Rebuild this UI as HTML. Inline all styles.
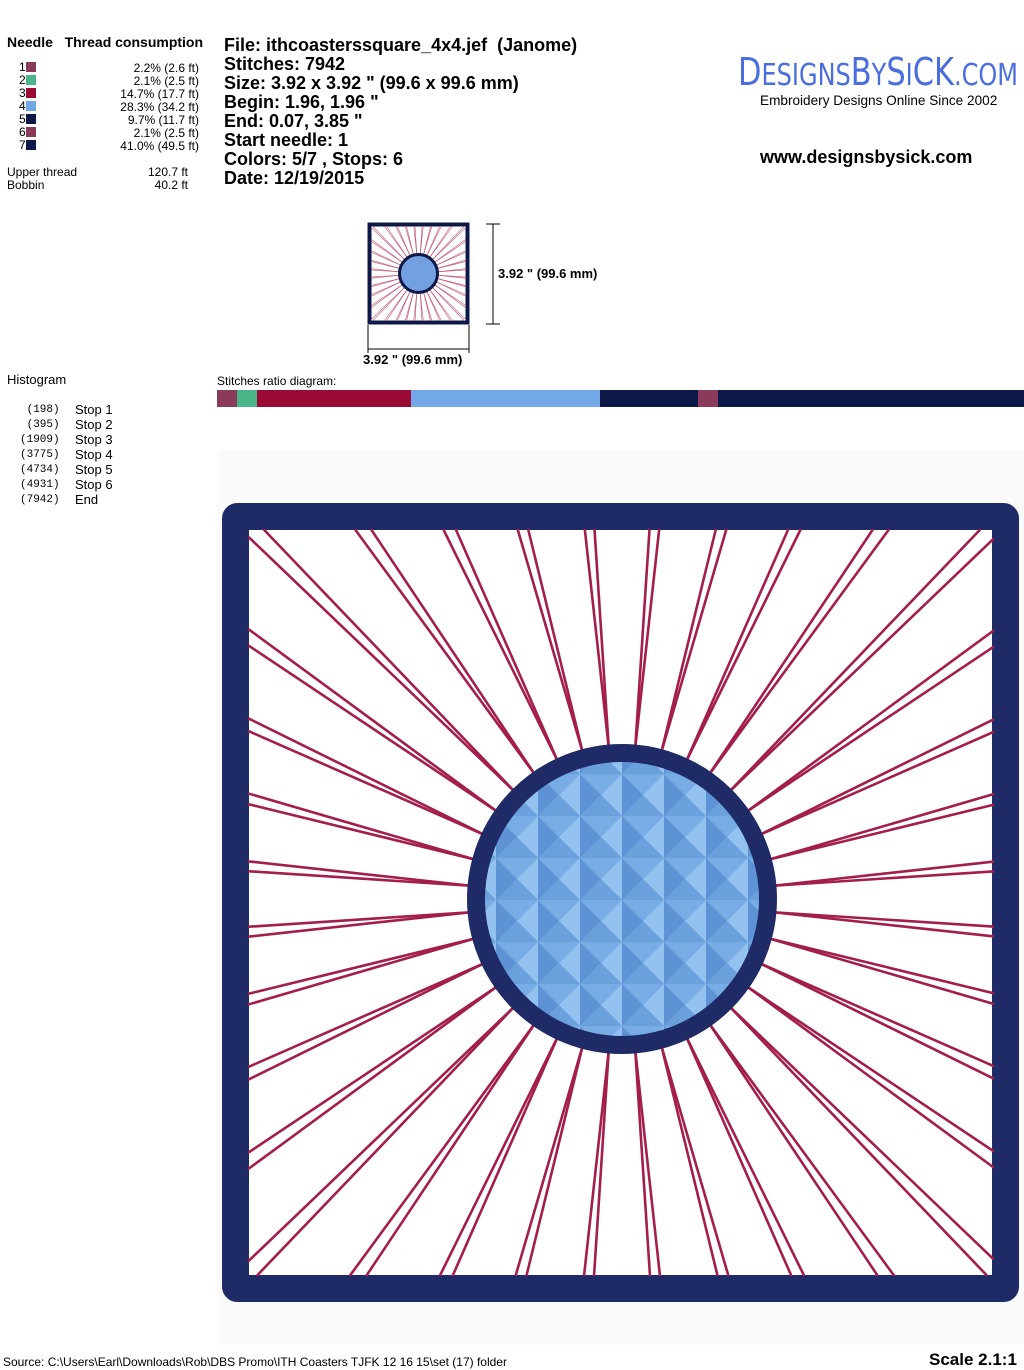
<!DOCTYPE html>
<html><head><meta charset="utf-8"><style>
body{margin:0;width:1024px;height:1370px;background:#fff;position:relative;overflow:hidden;font-family:"Liberation Sans",Arial,sans-serif;color:#000}
.a{position:absolute;white-space:nowrap}
.s{font-size:12px;line-height:13px}
.b{font-weight:bold;font-size:18px;line-height:19px}
.sw{display:inline-block;width:10px;height:10px;vertical-align:top;margin-top:1px}
</style></head><body>
<div class="a" style="left:7px;top:34px;font-weight:bold;font-size:14px">Needle&nbsp;&nbsp; Thread consumption</div>
<div class="a s" style="left:19px;top:61px">
1<span class="sw" style="background:#8a3a5a"></span><br>2<span class="sw" style="background:#4bb58a"></span><br>3<span class="sw" style="background:#9a0a35"></span><br>4<span class="sw" style="background:#73a8e6"></span><br>5<span class="sw" style="background:#0c1848"></span><br>6<span class="sw" style="background:#8a3a5a"></span><br>7<span class="sw" style="background:#0c1848"></span></div>
<div class="a s" style="left:100px;top:62px;width:99px;text-align:right">2.2% (2.6 ft)<br>2.1% (2.5 ft)<br>14.7% (17.7 ft)<br>28.3% (34.2 ft)<br>9.7% (11.7 ft)<br>2.1% (2.5 ft)<br>41.0% (49.5 ft)</div>
<div class="a s" style="left:7px;top:166px">Upper thread<br>Bobbin</div>
<div class="a s" style="left:130px;top:166px;width:58px;text-align:right">120.7 ft<br>40.2 ft</div>
<div class="a b" style="left:224px;top:36px">File: ithcoasterssquare_4x4.jef&nbsp; (Janome)<br>Stitches: 7942<br>Size: 3.92 x 3.92 " (99.6 x 99.6 mm)<br>Begin: 1.96, 1.96 "<br>End: 0.07, 3.85 "<br>Start needle: 1<br>Colors: 5/7 , Stops: 6<br>Date: 12/19/2015</div>
<div class="a" style="left:738px;top:52px;font-size:38px;line-height:40px;color:#4a6ee0;font-family:'DejaVu Sans Condensed','DejaVu Sans',sans-serif;transform:scaleX(0.89);transform-origin:left top">D<span style="font-size:30px">ESIGNS</span>B<span style="font-size:30px">Y</span>S<span style="font-size:30px">I</span>CK<span style="font-size:30px">.COM</span></div>
<div class="a" style="left:760px;top:93px;font-size:13.6px">Embroidery Designs Online Since 2002</div>
<div class="a" style="left:760px;top:147px;font-weight:bold;font-size:18px">www.designsbysick.com</div>

<svg class="a" style="left:360px;top:215px" width="260" height="160">
<rect x="9.5" y="9.5" width="98" height="98" fill="#fff" stroke="#0c1848" stroke-width="4"/>
<g id="mini"></g>
<circle cx="58.5" cy="58.5" r="19" fill="#73a0e0" stroke="#0c1848" stroke-width="3"/>
<line x1="133" y1="9" x2="133" y2="109" stroke="#000"/><line x1="126" y1="9" x2="140" y2="9" stroke="#000"/><line x1="126" y1="109" x2="140" y2="109" stroke="#000"/>
<line x1="8" y1="134" x2="109" y2="134" stroke="#000"/><line x1="8" y1="110" x2="8" y2="138" stroke="#000"/><line x1="109" y1="110" x2="109" y2="138" stroke="#000"/>
<text x="138" y="63" font-size="13" font-weight="bold" font-family="Liberation Sans">3.92 " (99.6 mm)</text>
<text x="3" y="149" font-size="13" font-weight="bold" font-family="Liberation Sans">3.92 " (99.6 mm)</text>
</svg>

<div class="a" style="left:7px;top:372px;font-size:13px">Histogram</div>
<div class="a" style="left:20px;top:403px;font-family:'Liberation Mono',monospace;font-size:11px;line-height:15px">&nbsp;(198)<br>&nbsp;(395)<br>(1909)<br>(3775)<br>(4734)<br>(4931)<br>(7942)</div>
<div class="a" style="left:75px;top:402px;font-size:13px;line-height:15px">Stop 1<br>Stop 2<br>Stop 3<br>Stop 4<br>Stop 5<br>Stop 6<br>End</div>
<div class="a" style="left:217px;top:374px;font-size:12px">Stitches ratio diagram:</div>
<div class="a" style="left:217px;top:390px;height:17px;width:807px;display:flex">
<div style="width:20px;background:#8a3a5a"></div><div style="width:20px;background:#4bb58a"></div><div style="width:154px;background:#9a0a35"></div><div style="width:189px;background:#73a8e6"></div><div style="width:98px;background:#0c1848"></div><div style="width:20px;background:#8a3a5a"></div><div style="flex:1;background:#0c1848"></div></div>

<div class="a" style="left:217px;top:450px;width:807px;height:895px;background:#fafafa"></div>
<svg class="a" style="left:0;top:0" width="1024" height="1370">
<rect x="235.5" y="516.5" width="770" height="772" rx="2" fill="#fff" stroke="#1f2b66" stroke-width="27"/>
<g id="rays" stroke-linecap="round"></g>
<defs><pattern id="q" x="622" y="900" width="42" height="42" patternUnits="userSpaceOnUse">
<rect width="42" height="42" fill="#7aaee6"/>
<polygon points="0,0 21,21 0,42" fill="#5d92d4"/><polygon points="42,0 21,21 42,42" fill="#94c2f0"/>
<polygon points="0,0 21,21 42,0" fill="#78ace4"/><polygon points="0,42 21,21 42,42" fill="#6aa0dc"/></pattern></defs>
<circle cx="622" cy="899" r="146" fill="url(#q)" stroke="#1f2b66" stroke-width="18"/>
</svg>
<div class="a" style="left:3px;top:1355px;font-size:12px">Source: C:\Users\Earl\Downloads\Rob\DBS Promo\ITH Coasters TJFK 12 16 15\set (17) folder</div>
<div class="a" style="left:929px;top:1350px;font-size:17px;font-weight:bold">Scale 2.1:1</div>
<script>
function build(g,cx,cy,r0,L,T,R,B,w,col,pairs,sp){
 var h="";
 for(var i=0;i<pairs;i++){
  var a0=(i+0.5)*2*Math.PI/pairs;
  for(var k=-1;k<=1;k+=2){
   var a=a0+k*sp;
   var sx=cx+r0*Math.cos(a0),sy=cy+r0*Math.sin(a0);
   var dx=Math.cos(a),dy=Math.sin(a),t=1e9;
   if(dx>0)t=Math.min(t,(R-sx)/dx);if(dx<0)t=Math.min(t,(L-sx)/dx);
   if(dy>0)t=Math.min(t,(B-sy)/dy);if(dy<0)t=Math.min(t,(T-sy)/dy);
   h+='<line x1="'+sx+'" y1="'+sy+'" x2="'+(sx+dx*t)+'" y2="'+(sy+dy*t)+'" stroke="'+col+'" stroke-width="'+w+'"/>';
  }
 }
 g.innerHTML=h;
}
build(document.getElementById('rays'),622,899,152,249,530,993,1275,2.6,'#a31e4a',36,0.022);
build(document.getElementById('mini'),58.5,58.5,19,11,11,106,106,0.6,'#c05070',36,0.022);
</script>
</body></html>
